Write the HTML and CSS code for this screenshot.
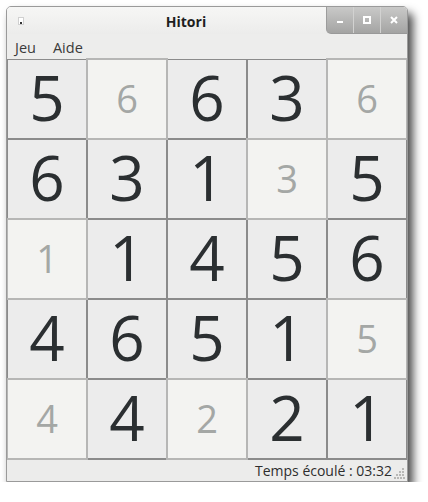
FILE: index.html
```html
<!DOCTYPE html>
<html lang="fr">
<head>
<meta charset="utf-8">
<title>Hitori</title>
<link rel="stylesheet" href="styles.css">
</head>
<body>
<div class="window">
  <div class="titlebar">
    <span class="winicon"><span class="winicon-dot"></span></span>
    <div class="title">Hitori</div>
    <div class="wbuttons">
      <span class="wbtn"><svg width="10" height="10" viewBox="0 0 10 10"><rect x="2" y="6" width="6" height="2" fill="#fff"/></svg></span>
      <span class="wbtn"><svg width="10" height="10" viewBox="0 0 10 10"><rect x="2" y="2" width="6" height="6" fill="none" stroke="#fff" stroke-width="2"/></svg></span>
      <span class="wbtn"><svg width="10" height="10" viewBox="0 0 10 10"><path d="M2 2 L8 8 M8 2 L2 8" stroke="#fff" stroke-width="2"/></svg></span>
    </div>
  </div>
  <div class="menubar">
    <span class="menu">Jeu</span>
    <span class="menu">Aide</span>
  </div>
  <div class="board">
    <div class="cell">5</div><div class="cell lit">6</div><div class="cell">6</div><div class="cell">3</div><div class="cell lit">6</div>
    <div class="cell">6</div><div class="cell">3</div><div class="cell">1</div><div class="cell lit">3</div><div class="cell">5</div>
    <div class="cell lit">1</div><div class="cell">1</div><div class="cell">4</div><div class="cell">5</div><div class="cell">6</div>
    <div class="cell">4</div><div class="cell">6</div><div class="cell">5</div><div class="cell">1</div><div class="cell lit">5</div>
    <div class="cell lit">4</div><div class="cell">4</div><div class="cell lit">2</div><div class="cell">2</div><div class="cell">1</div>
  </div>
  <div class="statusbar">
    <span class="status">Temps écoulé : 03:32</span>
    <svg class="grip" width="11" height="11" viewBox="0 0 11 11">
      <g fill="#b8b8b6">
        <rect x="8" y="0" width="2" height="2"/>
        <rect x="5" y="3" width="2" height="2"/><rect x="8" y="3" width="2" height="2"/>
        <rect x="2" y="6" width="2" height="2"/><rect x="5" y="6" width="2" height="2"/><rect x="8" y="6" width="2" height="2"/>
        <rect x="0" y="9" width="2" height="2"/><rect x="3" y="9" width="2" height="2"/><rect x="6" y="9" width="2" height="2"/><rect x="9" y="9" width="2" height="2"/>
      </g>
    </svg>
  </div>
</div>
</body>
</html>
```

FILE: styles.css
```css
html, body {
  margin: 0;
  padding: 0;
  background: #ffffff;
}

body {
  padding: 6px 0 0 6px;
  font-family: "Open Sans", "DejaVu Sans", sans-serif;
}

.window {
  width: 400px;
  border: 1px solid #9a9a9a;
  border-radius: 5px 5px 0 0;
  background: #ededec;
  box-shadow: 5px 7px 10px rgba(0, 0, 0, 0.72);
  overflow: hidden;
}

.titlebar {
  height: 27px;
  display: flex;
  align-items: flex-start;
  background: linear-gradient(#f6f6f5, #ececeb);
}

.winicon {
  width: 4px;
  height: 6px;
  margin: 10px 0 0 11px;
  background: #ffffff;
  border: 1px solid #d0d0d0;
  display: flex;
  justify-content: center;
  align-items: flex-end;
}

.winicon-dot {
  width: 2px;
  height: 2px;
  background: #333;
}

.title {
  flex: 1;
  text-align: center;
  padding-left: 22px;
  font-size: 14px;
  font-weight: bold;
  color: #1e1e1e;
  line-height: 30px;
}

.wbuttons {
  display: flex;
  height: 26px;
  border-radius: 0 0 0 5px;
  overflow: hidden;
  background: linear-gradient(#c9c9c8, #a4a4a3);
  border-left: 1px solid #9c9c9c;
  border-bottom: 1px solid #999;
}

.wbtn {
  width: 26px;
  display: flex;
  align-items: center;
  justify-content: center;
  border-left: 1px solid #d2d2d1;
}

.wbtn:first-child {
  border-left: none;
}

.menubar {
  height: 25px;
  display: flex;
  align-items: center;
  gap: 17px;
  padding-left: 8px;
  background: #ededec;
}

.menu {
  font-size: 14.5px;
  color: #3a3a3a;
  margin-top: 1px;
}

.board {
  display: grid;
  grid-template-columns: repeat(5, 80px);
  grid-template-rows: repeat(5, 80px);
}

.cell {
  box-sizing: border-box;
  border: 1px solid #8b8b8b;
  background: #ececec;
  display: flex;
  align-items: center;
  justify-content: center;
  font-size: 62px;
  color: #2b2f31;
  line-height: 1;
  padding-bottom: 4px;
}

.cell.lit {
  position: relative;
  z-index: 1;
  background: #f3f3f1;
  border-color: #b6b6b5;
  box-shadow: 0 0 0 1px #b6b6b5;
  font-size: 38px;
  color: #a4a7a5;
  padding-bottom: 2px;
}

.statusbar {
  height: 21px;
  display: flex;
  align-items: center;
  justify-content: flex-end;
  background: #ececeb;
  border-top: 1px solid #8b8b8b;
  position: relative;
}

.status {
  font-size: 14px;
  color: #2e2e2e;
  margin-right: 15px;
}

.grip {
  position: absolute;
  right: 2px;
  bottom: 2px;
}
```
